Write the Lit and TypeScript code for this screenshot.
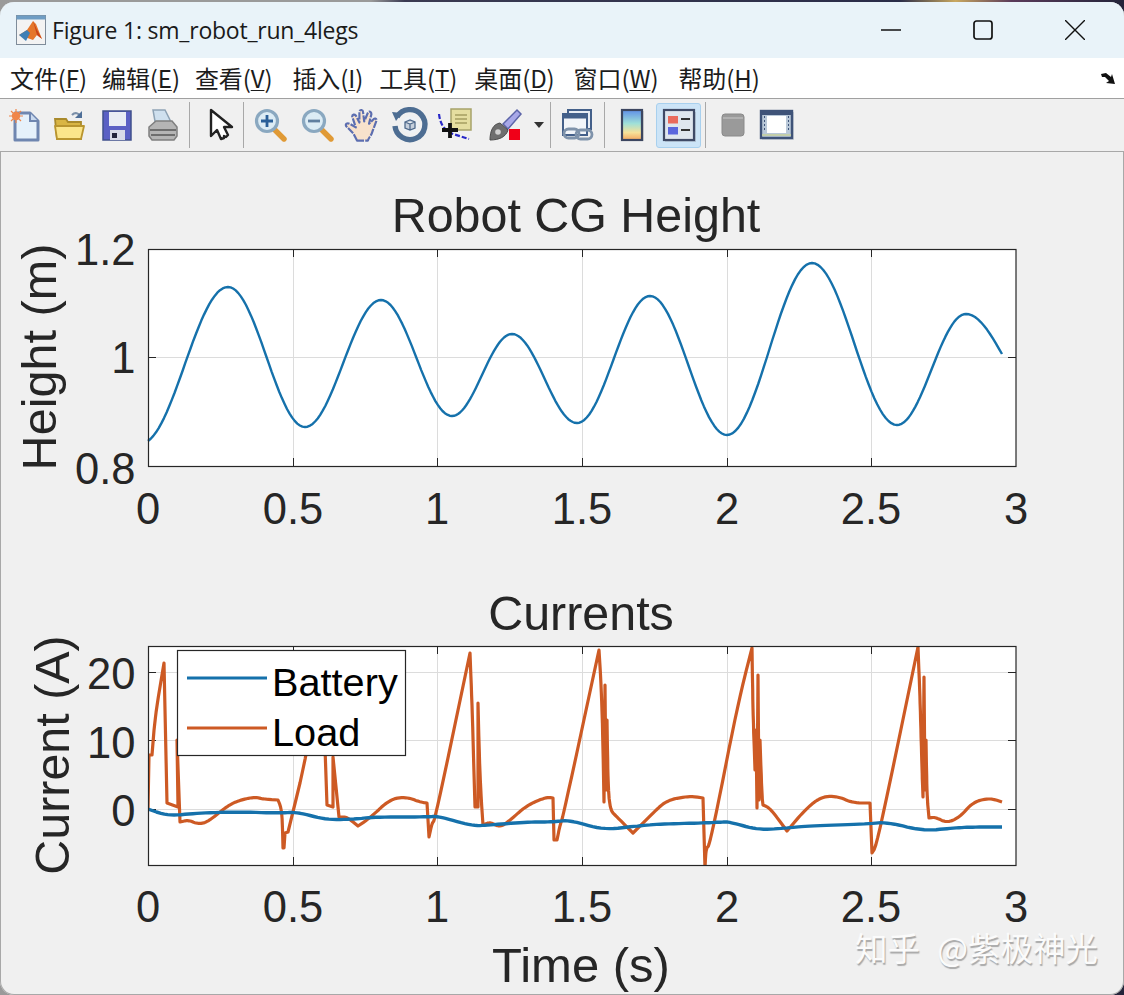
import { LitElement, html, css, svg } from "lit";
import { customElement } from "lit/decorators.js";

const TOP_EXT: [number, number][] = [[228,287],[305,427],[381,300],[452,416],[512,334],[577,423],[650,296],[727,435],[812,263],[897,425],[966,314]];

function topPath(): string {
  const pts: string[] = [];
  const add = (x: number, y: number) => pts.push(`${x.toFixed(1)},${y.toFixed(1)}`);
  add(148, 441);
  for (let i = 1; i <= 30; i++) {
    const u = i / 30;
    const e = (1 - Math.cos(Math.PI * (0.08 + 0.92 * u))) / 2;
    const e0 = (1 - Math.cos(Math.PI * 0.08)) / 2;
    add(148 + 80 * u, 441 + (287 - 441) * (e - e0) / (1 - e0));
  }
  for (let k = 0; k < TOP_EXT.length - 1; k++) {
    const [x0, y0] = TOP_EXT[k];
    const [x1, y1] = TOP_EXT[k + 1];
    for (let i = 1; i <= 30; i++) {
      const u = i / 30;
      add(x0 + (x1 - x0) * u, y0 + (y1 - y0) * (1 - Math.cos(Math.PI * u)) / 2);
    }
  }
  for (let i = 1; i <= 12; i++) {
    const u = i / 12;
    add(966 + 36 * u, 314 + 40 * (1 - Math.cos(Math.PI * u * 0.5)));
  }
  return pts.join(" ");
}

/* Rounds gentle bends of a trace while leaving its sharp spikes sharp. */
function smooth(src: string, rounds = 3): string {
  let p = src.split(" ").map((s) => s.split(",").map(Number));
  for (let r = 0; r < rounds; r++) {
    const out: number[][] = [p[0]];
    for (let i = 1; i < p.length - 1; i++) {
      const [a, b, c] = [p[i - 1], p[i], p[i + 1]];
      const v1 = [b[0] - a[0], b[1] - a[1]];
      const v2 = [c[0] - b[0], c[1] - b[1]];
      const dot = v1[0] * v2[0] + v1[1] * v2[1];
      const cos = dot / (Math.hypot(v1[0], v1[1]) * Math.hypot(v2[0], v2[1]) || 1);
      if (cos > 0.55) {
        out.push([b[0] - v1[0] * 0.25, b[1] - v1[1] * 0.25], [b[0] + v2[0] * 0.25, b[1] + v2[1] * 0.25]);
      } else {
        out.push(b);
      }
    }
    out.push(p[p.length - 1]);
    p = out;
  }
  return p.map((q) => `${q[0].toFixed(1)},${q[1].toFixed(1)}`).join(" ");
}

const LOAD = "148,808 149,755 152,755 155,717 164,663 167,803 178,807 177,740 180,822 188,820 198,824 208,822 227,806 240,800 255,797 263,799 278,800 282,810 283,848 284,848 285,833 288,832 307,755 319,665 323,690 327,805 333,807 333,757 339,817 347,817 358,826 370,818 390,799 407,797 420,802 427,803 429,837 432,823 435,820 470,653 472,703 475,807 478,807 478,703 480,780 483,825 490,822 499,827 507,823 527,805 547,797 553,798 554,840 557,840 560,825 563,817 599,650 602,700 604,802 605,685 606,790 607,720 608,783 610,810 617,817 633,833 653,813 667,800 690,796 703,798 705,868 706,848 710,845 738,703 752,648 753,713 755,770 756,730 757,808 758,675 759,800 760,740 762,797 763,805 770,808 787,831 803,812 820,797 837,796 853,803 870,803 872,853 877,845 918,647 920,697 922,770 923,797 924,677 925,790 926,740 927,797 929,818 935,817 947,823 960,817 973,802 990,798 1002,802";
const BATT = "148,809 168,816 198,813 237,812 280,813 297,812 327,820 357,819 373,817 427,817 438,816 472,826 490,825 527,822 553,822 570,820 603,830 637,826 660,824 703,823 723,822 730,822 758,830 787,828 807,826 867,824 887,822 923,831 953,828 973,827 1002,827";

const X_T = [148, 293, 437, 582, 727, 871, 1016];
const X_L = ["0", "0.5", "1", "1.5", "2", "2.5", "3"];

function axes(top: number, bottom: number, ys: number[]) {
  const left = 148, right = 1016;
  return svg`
    <rect x=${left} y=${top} width=${right - left} height=${bottom - top} fill="#fff"/>
    ${X_T.slice(1, -1).map((x) => svg`<line x1=${x + 0.5} x2=${x + 0.5} y1=${top} y2=${bottom} stroke="#dcdcdc" stroke-width="1"/>`)}
    ${ys.map((y) => svg`<line x1=${left} x2=${right} y1=${y + 0.5} y2=${y + 0.5} stroke="#dcdcdc" stroke-width="1"/>`)}
    ${X_T.slice(1, -1).map((x) => svg`
      <line x1=${x + 0.5} x2=${x + 0.5} y1=${top} y2=${top + 8} stroke="#262626"/>
      <line x1=${x + 0.5} x2=${x + 0.5} y1=${bottom} y2=${bottom - 8} stroke="#262626"/>`)}
    ${ys.map((y) => svg`
      <line x1=${left} x2=${left + 8} y1=${y + 0.5} y2=${y + 0.5} stroke="#262626"/>
      <line x1=${right} x2=${right - 8} y1=${y + 0.5} y2=${y + 0.5} stroke="#262626"/>`)}
  `;
}

const box = (top: number, bottom: number) =>
  svg`<rect x="148.5" y=${top + 0.5} width="867.5" height=${bottom - top} fill="none" stroke="#262626" stroke-width="1.2"/>`;

const ICONS: Record<string, unknown> = {
  newfile: svg`
    <path d="M6 4h15l8 8v19H6z" fill="#e6f1fb" stroke="#6f86b0" stroke-width="3" stroke-linejoin="round"/>
    <path d="M21 4v8h8" fill="#c9d9ee" stroke="#6f86b0" stroke-width="2"/>
    <circle cx="7" cy="7" r="4.2" fill="#f0864a"/>
    <path d="M7 0v14M0 7h14M2 2l10 10M12 2L2 12" stroke="#f0864a" stroke-width="1.2"/>`,
  open: svg`
    <path d="M18 6c3-3 7-2 8 1" fill="none" stroke="#7b8fa8" stroke-width="2.2"/>
    <path d="M28 2v7h-7z" fill="#4f6f98"/>
    <path d="M1 10h11l2 3h13v17H3z" fill="#d9b544" stroke="#a98a2c" stroke-width="1.8"/>
    <path d="M1 17h29l-3 13H3z" fill="#fbe58a" stroke="#b9952f" stroke-width="1.8" stroke-linejoin="round"/>`,
  save: svg`
    <path d="M2 2h28v29H2z" fill="#5a60c4" stroke="#40508c" stroke-width="1.5"/>
    <rect x="8" y="3" width="17" height="14" fill="#e8ecf4"/>
    <rect x="9" y="21" width="15" height="10" fill="#d8dae8"/>
    <rect x="11" y="24" width="5" height="5" fill="#23243c"/>`,
  print: svg`
    <path d="M6 1h12l5 10v7H9z" fill="#cfe0ee" stroke="#8ea3b5" stroke-width="1.5"/>
    <path d="M2 18l7-6h16l5 6v9l-3 4H5l-3-4z" fill="#b5b5b5" stroke="#7f7f7f" stroke-width="1.5"/>
    <path d="M3 21h26M4 26h24" stroke="#6e6e6e" stroke-width="1.8"/>`,
  arrow: svg`
    <path d="M7 1v26l6-6 4 9 3-1v-2l2 1 2-2-4-8h8z" fill="#fff" stroke="#222" stroke-width="2.4" stroke-linejoin="round"/>`,
  zoomin: svg`
    <path d="M19 19l11 11" stroke="#e09a36" stroke-width="5.4" stroke-linecap="round"/>
    <circle cx="13" cy="12" r="10.5" fill="#dcecf5" stroke="#8aa8c0" stroke-width="3.2"/>
    <path d="M7 12h12M13 6v12" stroke="#2a5f98" stroke-width="2.8"/>`,
  zoomout: svg`
    <path d="M19 19l11 11" stroke="#e09a36" stroke-width="5.4" stroke-linecap="round"/>
    <circle cx="13" cy="12" r="10.5" fill="#dcecf5" stroke="#8aa8c0" stroke-width="3.2"/>
    <path d="M7 12h12" stroke="#5f7f9f" stroke-width="2.8"/>`,
  hand: svg`
    <g transform="translate(-2 -2) scale(1.2)">
      <path d="M10 28l-3-6-6-6c-1-2 1-3 3-2l5 3-3-9c0-2 2-2 3-1l3 6 0-9c0-2 3-2 3 0l1 8 3-7c1-2 3-1 3 1l-2 8 4-4c1-1 3 0 2 2l-3 8c-1 4-3 5-4 8z" fill="#f8e2cc" stroke="#5c6eb0" stroke-width="1.8" stroke-linejoin="round" stroke-dasharray="6 1"/>
    </g>`,
  rotate: svg`
    <path d="M4 8a15 15 0 1 1-2 9" fill="none" stroke="#4d6d92" stroke-width="5.4"/>
    <path d="M-1 3l10 1-6 8z" fill="#4d6d92"/>
    <circle cx="17" cy="16" r="8.5" fill="#eef2f6"/>
    <path d="M12 13l5-2 5 2v6l-5 2-5-2zM12 13l5 2 5-2M17 15v6" fill="#c6d0dd" stroke="#4f6a8c" stroke-width="1.3"/>`,
  cursor: svg`
    <path d="M0 5c1 9 5 17 14 20l16 5" fill="none" stroke="#2727c8" stroke-width="2.2" stroke-dasharray="5 2"/>
    <path d="M12 0h20v21H14l-2-2z" fill="#e5dea0" stroke="#a6a36a" stroke-width="1.5"/>
    <path d="M16 6h12M16 10h12M16 14h12" stroke="#b5ae70" stroke-width="1.8"/>
    <path d="M11 14v15M3 21h16" stroke="#111" stroke-width="3.8"/>`,
  brush: svg`
    <path d="M14 15L28 1l4 4-13 15z" fill="#a8a8e8" stroke="#5c64a8" stroke-width="1.5"/>
    <path d="M1 31c0-9 3-16 10-17l8 7c-2 7-9 10-18 10z" fill="#6e6e6e" stroke="#4a4a4a"/>
    <circle cx="9" cy="23" r="2.8" fill="#cfcfcf"/>
    <rect x="20" y="20" width="11" height="11" fill="#f00018"/>`,
  link: svg`
    <rect x="7" y="1" width="23" height="19" fill="#e8edf4" stroke="#44608a" stroke-width="2"/>
    <rect x="2" y="5" width="24" height="21" fill="#f2f5f9" stroke="#44608a" stroke-width="2"/>
    <rect x="2" y="5" width="24" height="4.5" fill="#44608a"/>
    <rect x="3" y="20" width="15" height="9" rx="4.5" fill="none" stroke="#7f93ab" stroke-width="2.8"/>
    <rect x="15" y="21" width="16" height="9" rx="4.5" fill="none" stroke="#7f93ab" stroke-width="2.8"/>`,
  colorbar: svg`
    <defs><linearGradient id="cb" x1="0" x2="0" y1="0" y2="1"><stop offset="0" stop-color="#5f8fe8"/><stop offset=".45" stop-color="#9fe0d8"/><stop offset=".75" stop-color="#f6e29a"/><stop offset="1" stop-color="#f4a860"/></linearGradient></defs>
    <rect x="7" y="2" width="21" height="30" fill="#bbb" opacity=".6"/>
    <rect x="6" y="1" width="20" height="30" fill="url(#cb)" stroke="#3c4660" stroke-width="2.2"/>`,
  legend: svg`
    <rect x="2" y="3" width="31" height="30" fill="#aab8c8" opacity=".7"/>
    <rect x="1" y="1" width="30" height="30" fill="#dfe6ee" stroke="#3f4a66" stroke-width="2.2"/>
    <rect x="5" y="7" width="10" height="7.5" fill="#ea6a5c"/>
    <rect x="5" y="18" width="10" height="7.5" fill="#5a66de"/>
    <path d="M18 10h9M18 21h9" stroke="#333" stroke-width="2.2"/>`,
  grayplot: svg`
    <rect x="5" y="5" width="22" height="22" rx="3" fill="#9a9a9a" stroke="#8a8a8a"/>
    <path d="M6 9h20" stroke="#b8b8b8" stroke-width="1.5"/>`,
  film: svg`
    <rect x="1" y="3" width="32" height="28" fill="#b7c0c9" opacity=".6"/>
    <rect x="0" y="2" width="31" height="27" fill="#b9c8d8" stroke="#3f5378" stroke-width="2.4"/>
    <rect x="0" y="2" width="31" height="4" fill="#3f5378"/>
    <path d="M3 8h1M3 12h1M3 16h1M3 20h1M27 8h1M27 12h1M27 16h1M27 20h1" stroke="#3f5378" stroke-width="2"/>
    <rect x="6" y="7" width="19" height="17" fill="#fff"/>
    <path d="M1 26h29" stroke="#c4cfa4" stroke-width="1.8"/>`,
};

type Tool = { k: string; c: number };
const TOOLS: Tool[] = [
  { k: "newfile", c: 25 }, { k: "open", c: 70 }, { k: "save", c: 117 }, { k: "print", c: 163 }, { k: "sep", c: 189 },
  { k: "arrow", c: 220 }, { k: "sep", c: 243 },
  { k: "zoomin", c: 270 }, { k: "zoomout", c: 317 }, { k: "hand", c: 363 }, { k: "rotate", c: 409 }, { k: "cursor", c: 455 }, { k: "brush", c: 505 }, { k: "drop", c: 539 }, { k: "sep", c: 550 },
  { k: "link", c: 577 }, { k: "sep", c: 604 },
  { k: "colorbar", c: 632 }, { k: "legend", c: 678.5 }, { k: "sep", c: 705 },
  { k: "grayplot", c: 733 }, { k: "film", c: 777 },
];

const toolWidth = (k: string) => (k === "sep" ? 1 : k === "drop" ? 10 : k === "legend" ? 45 : 34);

const MENUS: [string, string, number][] = [["文件", "F", 15], ["编辑", "E", 15], ["查看", "V", 20], ["插入", "I", 16], ["工具", "T", 17], ["桌面", "D", 19], ["窗口", "W", 20], ["帮助", "H", 0]];

@customElement("app-root")
export class AppRoot extends LitElement {
  static styles = css`
    :host {
      display: block;
      width: 1124px;
      height: 995px;
      overflow: hidden;
      background: linear-gradient(90deg, #9a9a9a 0, #9a9a9a 33%, #3a3a52 36%, #2a2c48 80%, #c9a860 85%, #5a3a5a 90%, #23243a 100%);
    }
    .win {
      margin-top: 2px;
      height: 993px;
      border-radius: 14px;
      overflow: hidden;
      background: #f0f0f0;
      box-shadow: inset 0 0 0 1px #a8a8a8;
      display: flex;
      flex-direction: column;
      position: relative;
    }
    .title {
      height: 56px;
      flex: none;
      background: #e9f3f9;
      display: flex;
      align-items: center;
      padding-left: 16px;
      font: 23px "Open Sans", "Noto Sans", sans-serif;
      color: #1a1a1a;
    }
    .logo { width: 30px; height: 30px; margin-right: 6px; flex: none; }
    .title-text { flex: 1; letter-spacing: -0.22px; }
    .wbtns { display: flex; align-items: center; padding-right: 39px; gap: 72px; }
    .wbtns svg { display: block; }
    .menu {
      height: 41px;
      flex: none;
      background: #fff;
      border-bottom: 1px solid #a0a0a0;
      display: flex;
      align-items: center;
      padding: 0 0 2px 10px;
      font: 24px "Noto Sans CJK SC", "Liberation Sans", sans-serif;
      color: #1c1c1c;
      position: relative;
      box-sizing: border-box;
    }
    .mi { letter-spacing: -0.1px; white-space: nowrap; }
    .mi u { text-underline-offset: 2px; text-decoration-thickness: 1px; }
    .corner { position: absolute; right: 8px; top: 13px; }
    .tools {
      height: 53px;
      flex: none;
      box-sizing: border-box;
      background: #f0f0f0;
      border-bottom: 1px solid #a8a8a8;
      display: flex;
      align-items: center;
    }
    .tb {
      height: 45px;
      display: flex;
      align-items: center;
      justify-content: center;
      box-sizing: border-box;
      flex: none;
    }
    .tb svg { width: 32px; height: 32px; display: block; overflow: visible; filter: blur(0.45px); }
    .tb.sel { background: #cce4f7; border: 1px solid #a8d0ee; border-radius: 3px; }
    .sep { height: 46px; background: #a8a8a8; flex: none; }
    .drop { height: 0; box-sizing: border-box; border: 5px solid transparent; border-top: 6px solid #333; border-bottom: 0; flex: none; }
    .fig { flex: 1; min-height: 0; display: block; }
    .fig svg { display: block; }
    .fig text { font-family: "Liberation Sans", Arial, sans-serif; fill: #262626; }
    .fig .lg { fill: #000; }
    .mark {
      position: absolute;
      left: 855px;
      top: 921px;
      font: 32.5px "Noto Sans CJK SC", sans-serif;
      word-spacing: 10px;
      color: #fbfbfb;
      text-shadow: 1px 2px 1px #a8a8a8;
      white-space: nowrap;
    }
  `;

  private tools() {
    let x = 0;
    return TOOLS.map((t) => {
      const w = toolWidth(t.k);
      const start = t.c - w / 2;
      const ml = `margin-left:${start - x}px;width:${w}px`;
      x = start + w;
      if (t.k === "sep") return html`<div class="sep" style=${ml}></div>`;
      if (t.k === "drop") return html`<div class="drop" style=${ml}></div>`;
      return html`<div class="tb ${t.k === "legend" ? "sel" : ""}" style=${ml}><svg viewBox="0 0 32 32">${ICONS[t.k]}</svg></div>`;
    });
  }

  render() {
    return html`<div class="win">
      <div class="title">
        <svg class="logo" viewBox="0 0 30 30">
          <rect x="0.5" y="0.5" width="29" height="29" fill="#f3f3f3" stroke="#7f8c9a"/>
          <rect x="0.5" y="0.5" width="29" height="4" fill="#6f9dc4"/>
          <path d="M3 20l8-5 6-9 3 3 6 15-5-4-4 5z" fill="#e5762a"/>
          <path d="M3 20l8-5 3 3-4 8z" fill="#3f7fb5"/>
          <path d="M17 6l4 9 5 9-5-4z" fill="#c8431a"/>
        </svg>
        <div class="title-text">Figure 1: sm_robot_run_4legs</div>
        <div class="wbtns">
          <svg width="20" height="20" viewBox="0 0 20 20"><path d="M0 10h20" stroke="#111" stroke-width="1.7"/></svg>
          <svg width="20" height="20" viewBox="0 0 20 20"><rect x="1" y="1" width="18" height="18" rx="2.5" fill="none" stroke="#111" stroke-width="1.7"/></svg>
          <svg width="20" height="20" viewBox="0 0 20 20"><path d="M0 0l20 20M20 0L0 20" stroke="#111" stroke-width="1.4"/></svg>
        </div>
      </div>
      <div class="menu">
        ${MENUS.map(([n, k, m]) => html`<span class="mi" style="margin-right:${m}px">${n}(<u>${k}</u>)</span>`)}
        <svg class="corner" width="16" height="14" viewBox="0 0 16 14"><path d="M1 3l5-1 5 4 1-3 3 10-9-1 3-2-4-4-3 0z" fill="#111"/></svg>
      </div>
      <div class="tools">${this.tools()}</div>
      <div class="fig">
        <svg width="1124" height="843" viewBox="0 152 1124 843">
          <defs>
            <clipPath id="c2"><rect x="148" y="646" width="868" height="219"/></clipPath>
          </defs>
          ${axes(249, 466, [357])}
          <polyline points=${topPath()} fill="none" stroke="#1571ab" stroke-width="2.4" stroke-linejoin="round"/>
          ${box(249, 466)}
          <text x="576" y="232" font-size="48.4" text-anchor="middle">Robot CG Height</text>
          <text x="135.5" y="265" font-size="43.5" text-anchor="end">1.2</text>
          <text x="135.5" y="373" font-size="43.5" text-anchor="end">1</text>
          <text x="135.5" y="484" font-size="43.5" text-anchor="end">0.8</text>
          ${X_T.map((x, i) => svg`<text x=${x} y="524" font-size="43.5" text-anchor="middle">${X_L[i]}</text>`)}
          <text transform="translate(56 357) rotate(-90)" font-size="48.6" text-anchor="middle">Height (m)</text>

          ${axes(646, 865, [672, 740, 809])}
          <g clip-path="url(#c2)">
            <polyline points=${smooth(LOAD)} fill="none" stroke="#cd5a24" stroke-width="3.2" stroke-linejoin="round"/>
            <polyline points=${smooth(BATT)} fill="none" stroke="#1571ab" stroke-width="3.4" stroke-linejoin="round"/>
          </g>
          ${box(646, 865)}
          <text x="581" y="630" font-size="48.4" text-anchor="middle">Currents</text>
          <text x="135.5" y="689" font-size="43.5" text-anchor="end">20</text>
          <text x="135.5" y="758" font-size="43.5" text-anchor="end">10</text>
          <text x="135.5" y="826" font-size="43.5" text-anchor="end">0</text>
          ${X_T.map((x, i) => svg`<text x=${x} y="922" font-size="43.5" text-anchor="middle">${X_L[i]}</text>`)}
          <text transform="translate(69 755) rotate(-90)" font-size="48.4" text-anchor="middle">Current (A)</text>
          <text x="581" y="982" font-size="49" text-anchor="middle">Time (s)</text>

          <rect x="177.5" y="650.5" width="228" height="105" fill="#fff" stroke="#262626" stroke-width="1.2"/>
          <line x1="187" x2="267" y1="678" y2="678" stroke="#1571ab" stroke-width="3"/>
          <line x1="187" x2="267" y1="728" y2="728" stroke="#cd5a24" stroke-width="3"/>
          <text class="lg" x="272" y="695.5" font-size="39.7">Battery</text>
          <text class="lg" x="272" y="745.5" font-size="39.7">Load</text>
        </svg>
      </div>
      <div class="mark">知乎 @紫极神光</div>
    </div>`;
  }
}
